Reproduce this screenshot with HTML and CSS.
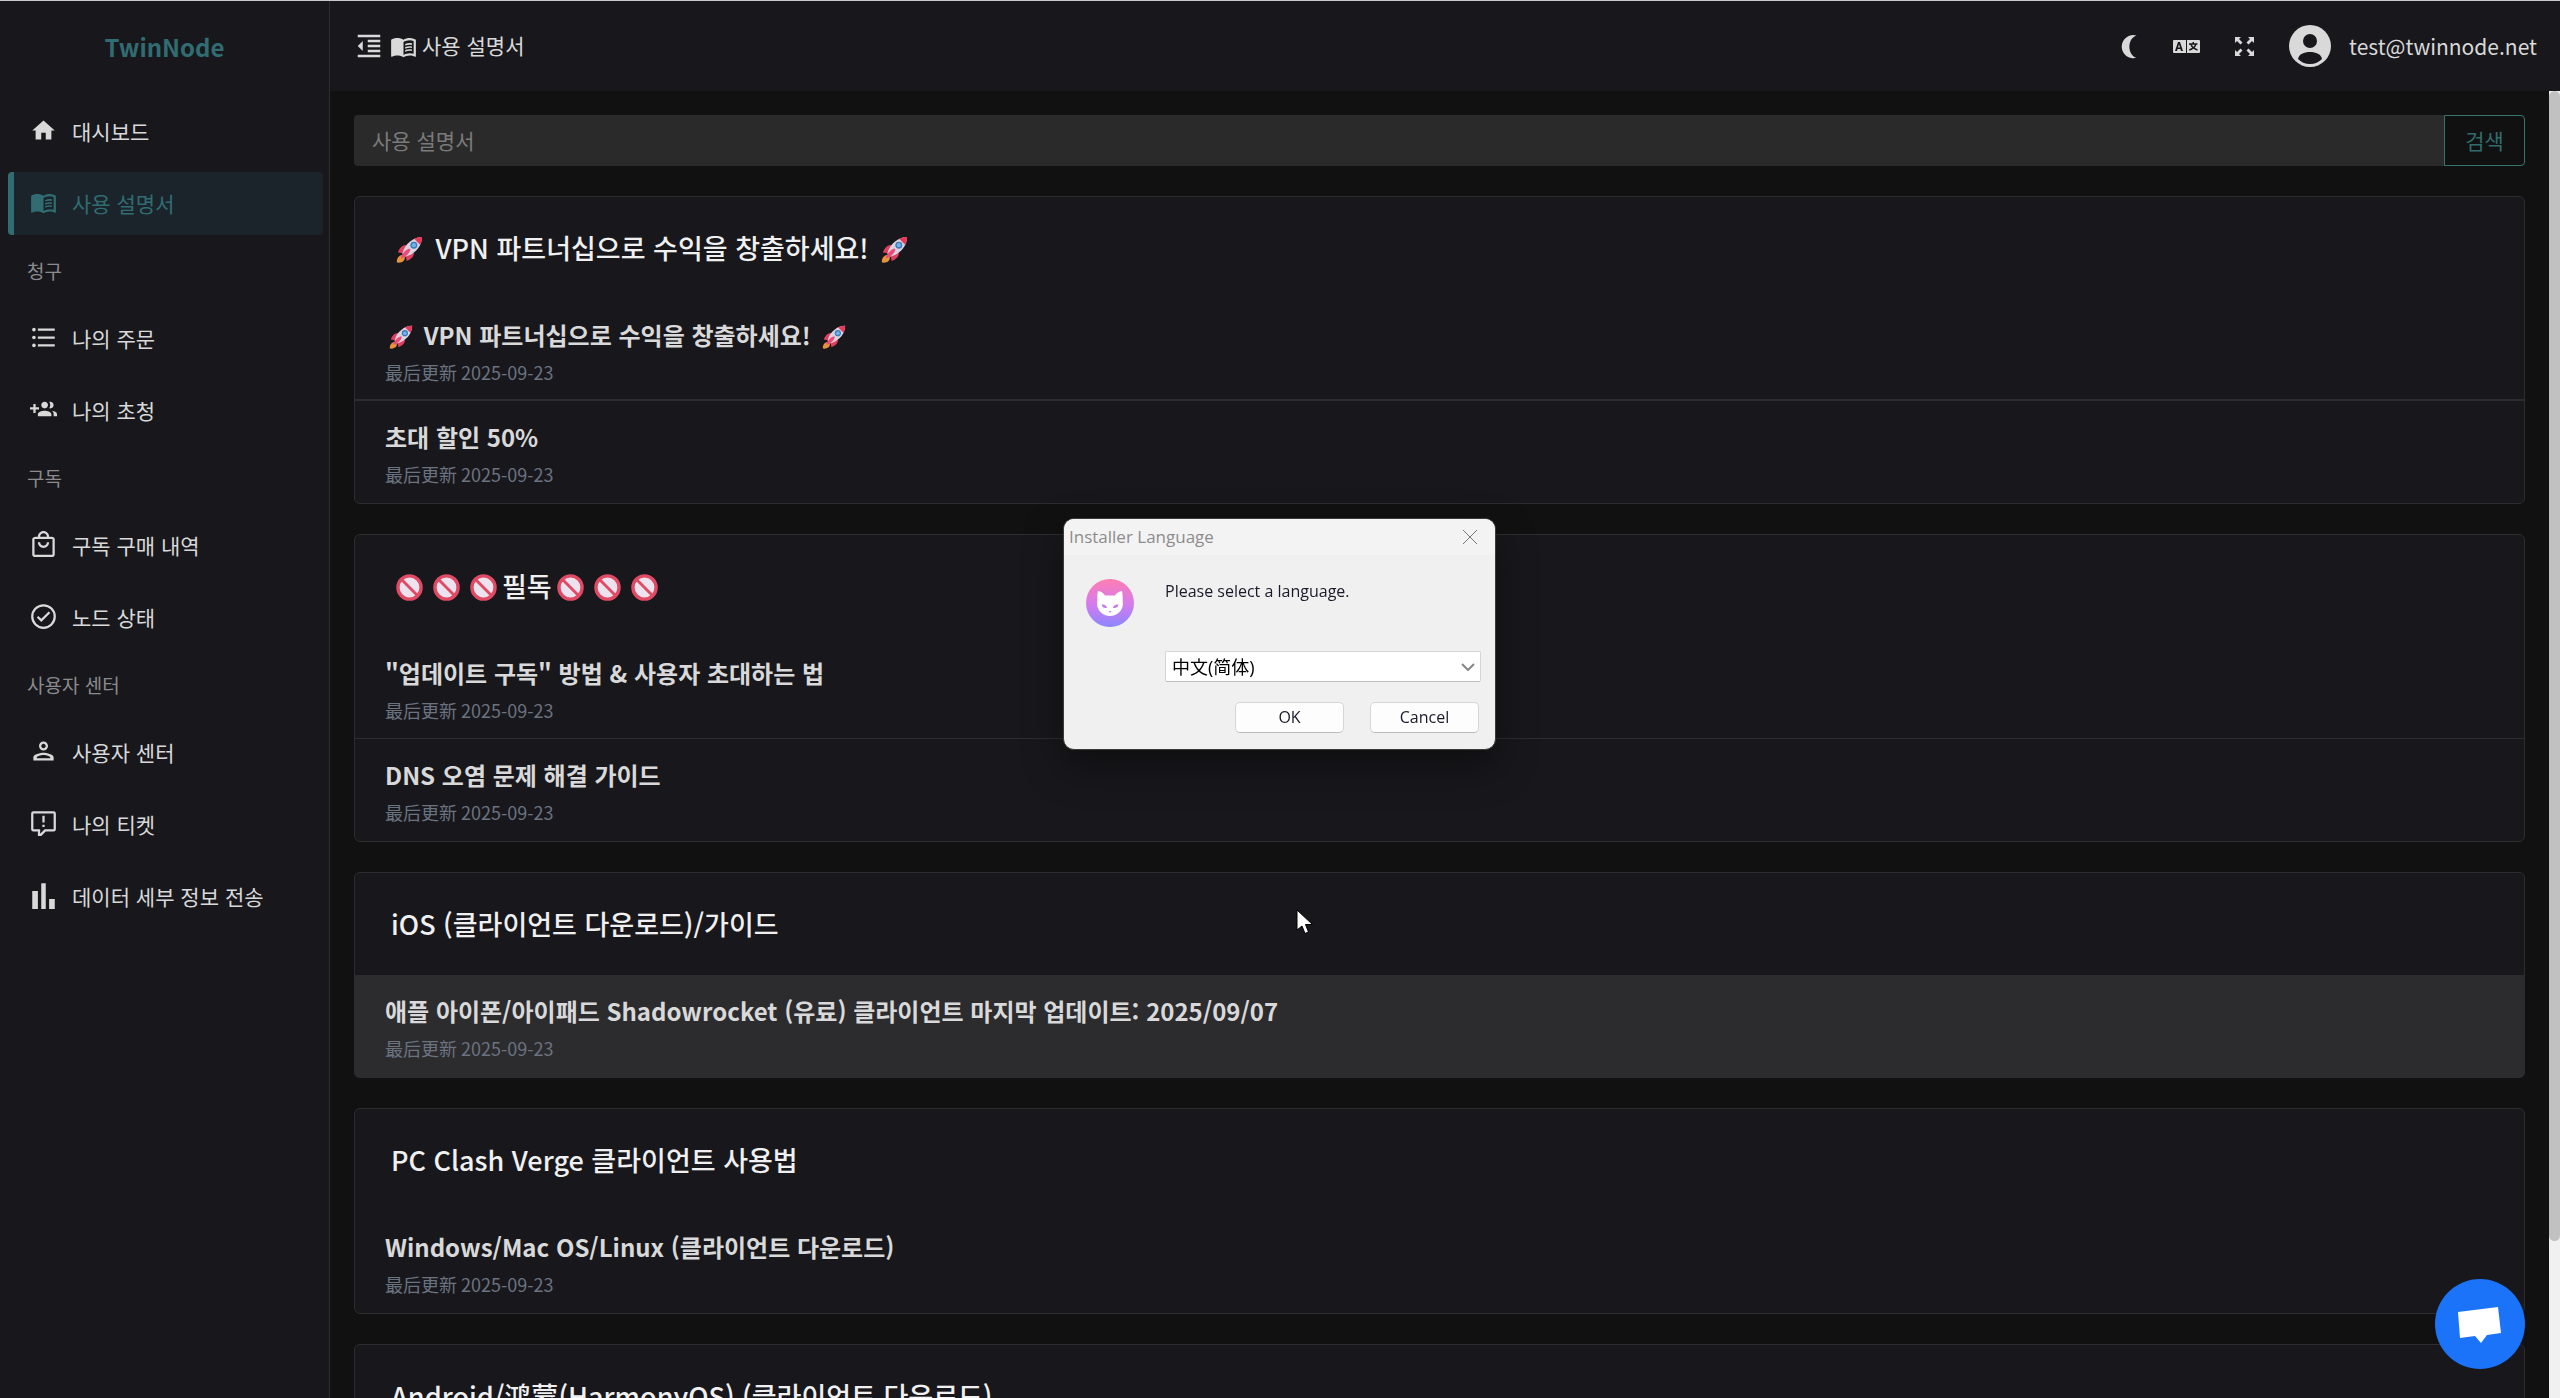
FILE: index.html
```html
<!DOCTYPE html>
<html lang="ko">
<head>
    <meta charset="UTF-8">
    <meta name="viewport" content="width=device-width, initial-scale=1.0">
    <title>사용 설명서 | TwinNode</title>
    <link rel="stylesheet" href="styles.css">
</head>
<body>
    <svg class="sprite" aria-hidden="true">
        <symbol id="rocket" viewBox="0 0 28 28">
            <path fill="#e0405f" d="M11 9.500C7 9 4 12 2 17l6 1zM18.500 17c.5 4-2.500 7-7.500 9l-1-6z"/>
            <path fill="#e8923c" d="M5 20c3-1 5 1 4 4-1 3-5 4-8 3.500C.5 24.500 2 21 5 20z"/>
            <path fill="#d9d3e0" d="M27 1C18 1 9 8 6.500 18.500L9.500 21.500C20 19 27 10 27 1z"/>
            <path fill="#e8385a" d="M27 1c-3 0-5.500.6-8 2l6 6c1.400-2.500 2-5 2-8z"/>
            <path fill="#ee4a78" d="M14 13c-4 1-6.500 4-9 9l1 1c5-2 8-5 9-9z"/>
            <circle cx="18.500" cy="9.500" r="3.600" fill="#3f78b8"/>
            <circle cx="18.500" cy="9.500" r="2.200" fill="#6db4ea"/>
        </symbol>
        <symbol id="ban" viewBox="0 0 28 28">
            <circle cx="14" cy="14" r="12" fill="#ece3ee" stroke="#e04a64" stroke-width="3.500"/>
            <path d="M5.500 5.500l17 17" stroke="#e04a64" stroke-width="3"/>
        </symbol>
    </svg>

    <div class="layout">
        <aside class="sidebar">
            <a class="logo" href="#">TwinNode</a>
            <nav class="menu">
                <a class="menu-item" href="#">
                    <svg class="icon" viewBox="0 0 24 24"><path d="M10 20v-6h4v6h5v-8h3L12 3 2 12h3v8z"/></svg>
                    대시보드
                </a>
                <a class="menu-item active" href="#">
                    <svg class="icon" viewBox="0 0 24 24"><path fill-rule="evenodd" d="M21 5c-1.100-.35-2.300-.5-3.500-.5-1.950 0-4.050.4-5.500 1.500-1.450-1.100-3.550-1.500-5.500-1.500S2.450 4.900 1 6v14.650c0 .25.25.5.5.5.1 0 .15-.05.25-.05C3.100 20.450 5.050 20 6.500 20c1.950 0 4.050.4 5.500 1.500 1.350-.85 3.800-1.500 5.500-1.500 1.650 0 3.350.3 4.750 1.050.1.050.15.050.25.050.25 0 .5-.25.5-.5V6c-.6-.45-1.250-.75-2-1zm0 13.500c-1.100-.35-2.300-.5-3.500-.5-1.700 0-4.150.65-5.500 1.500V8c1.350-.85 3.800-1.500 5.500-1.500 1.200 0 2.400.15 3.500.5z"/><path d="M13.500 9.700c2.200-.8 4.200-.9 6-.5v1.400c-1.800-.4-3.800-.3-6 .6zM13.500 12.400c2.200-.8 4.200-.9 6-.5v1.400c-1.800-.4-3.800-.3-6 .6zM13.500 15.100c2.200-.8 4.200-.9 6-.5V16c-1.800-.4-3.800-.3-6 .6z"/></svg>
                    사용 설명서
                </a>
                <div class="menu-group">청구</div>
                <a class="menu-item" href="#">
                    <svg class="icon" viewBox="0 0 24 24"><path d="M7 4h15v2H7zM7 11h15v2H7zM7 18h15v2H7z"/><circle cx="3.500" cy="5" r="1.600"/><circle cx="3.500" cy="12" r="1.600"/><circle cx="3.500" cy="19" r="1.600"/></svg>
                    나의 주문
                </a>
                <a class="menu-item" href="#">
                    <svg class="icon" viewBox="0 0 24 24"><path d="M8 10H5V7H3v3H0v2h3v3h2v-3h3v-2zm10 1c1.660 0 2.990-1.340 2.990-3S19.660 5 18 5c-.32 0-.63.050-.91.140.57.810.9 1.790.9 2.860s-.34 2.040-.9 2.860c.28.090.59.140.91.140zm-5 0c1.660 0 2.990-1.340 2.990-3S14.660 5 13 5s-3 1.340-3 3 1.340 3 3 3zm6.620 2.160c.83.73 1.380 1.660 1.380 2.840v2h3v-2c0-1.540-2.370-2.490-4.380-2.840zM13 13c-2 0-6 1-6 3v2h12v-2c0-2-4-3-6-3z"/></svg>
                    나의 초청
                </a>
                <div class="menu-group">구독</div>
                <a class="menu-item" href="#">
                    <svg class="icon" viewBox="0 0 24 24"><path d="M19 5h-2c0-2.760-2.240-5-5-5S7 2.240 7 5H5c-1.660 0-3 1-3 2v14c0 1.100.9 2 2 2h16c1.100 0 2-.9 2-2V7c0-1-1-2-3-2zm-7-3c1.660 0 3 1.340 3 3H9c0-1.660 1.340-3 3-3zm8 19H4V7h16zm-8-8c-1.660 0-3-1.340-3-3H7c0 2.760 2.240 5 5 5s5-2.240 5-5h-2c0 1.660-1.340 3-3 3z"/></svg>
                    구독 구매 내역
                </a>
                <a class="menu-item" href="#">
                    <svg class="icon" viewBox="0 0 24 24"><path d="M12 1a11 11 0 1 0 0 22 11 11 0 0 0 0-22zm0 20a9 9 0 1 1 0-18 9 9 0 0 1 0 18z"/><path d="M16.600 7.500L10 14.100l-2.600-2.600L6 12.900l4 4 8-8z"/></svg>
                    노드 상태
                </a>
                <div class="menu-group">사용자 센터</div>
                <a class="menu-item" href="#">
                    <svg class="icon" viewBox="0 0 24 24"><path d="M12 5c1.100 0 2 .9 2 2s-.9 2-2 2-2-.9-2-2 .9-2 2-2m0 10c2.700 0 5.800 1.290 6 2v1H6v-.99c.2-.72 3.300-2.010 6-2.010m0-12C9.790 3 8 4.790 8 7s1.790 4 4 4 4-1.790 4-4-1.790-4-4-4zm0 10c-2.670 0-9 1.340-9 4v3h18v-3c0-2.660-6.330-4-9-4z"/></svg>
                    사용자 센터
                </a>
                <a class="menu-item" href="#">
                    <svg class="icon" viewBox="0 0 24 24"><path d="M21 1H3a2 2 0 0 0-2 2v14a2 2 0 0 0 2 2h4v4h3l4-4h7a2 2 0 0 0 2-2V3a2 2 0 0 0-2-2zm0 16h-8l-4 4v-4H3V3h18z"/><path d="M11 5h2v6h-2zM11 13h2v2h-2z"/></svg>
                    나의 티켓
                </a>
                <a class="menu-item" href="#">
                    <svg class="icon" viewBox="0 0 24 24"><path d="M2 8h5v16H2zM10 1h4v23h-4zM17 15h5v9h-5z"/></svg>
                    데이터 세부 정보 전송
                </a>
            </nav>
        </aside>

        <div class="page">
            <header class="header">
                <button class="icon-btn" type="button" aria-label="메뉴 접기">
                    <svg class="icon-fold" viewBox="0 0 24 24"><path d="M11 17h10v-2H11v2zm-8-5l4 4V8l-4 4zm0 9h18v-2H3v2zM3 3v2h18V3H3zm8 6h10V7H11v2zm0 4h10v-2H11v2z"/></svg>
                </button>
                <div class="breadcrumb">
                    <svg class="icon" viewBox="0 0 24 24"><path fill-rule="evenodd" d="M21 5c-1.100-.35-2.300-.5-3.500-.5-1.950 0-4.050.4-5.500 1.500-1.450-1.100-3.550-1.500-5.500-1.500S2.450 4.900 1 6v14.650c0 .25.25.5.5.5.1 0 .15-.05.25-.05C3.100 20.450 5.050 20 6.500 20c1.950 0 4.050.4 5.500 1.500 1.350-.85 3.800-1.500 5.500-1.500 1.650 0 3.350.3 4.750 1.050.1.050.15.050.25.050.25 0 .5-.25.5-.5V6c-.6-.45-1.250-.75-2-1zm0 13.500c-1.100-.35-2.300-.5-3.500-.5-1.700 0-4.150.65-5.500 1.500V8c1.350-.85 3.800-1.500 5.500-1.500 1.200 0 2.400.15 3.500.5z"/><path d="M13.500 9.700c2.200-.8 4.200-.9 6-.5v1.400c-1.800-.4-3.800-.3-6 .6zM13.500 12.400c2.200-.8 4.200-.9 6-.5v1.400c-1.800-.4-3.800-.3-6 .6zM13.500 15.100c2.200-.8 4.200-.9 6-.5V16c-1.800-.4-3.800-.3-6 .6z"/></svg>
                    <span>사용 설명서</span>
                </div>
                <div class="header-right">
                    <button class="icon-btn" type="button" aria-label="다크 모드">
                        <svg class="icon" viewBox="0 0 27 27"><path d="M21.500 2.500A11.600 11.600 0 1 0 21.500 24.800C12 22 12 5.500 21.500 2.500z"/></svg>
                    </button>
                    <button class="icon-btn" type="button" aria-label="언어">
                        <svg class="icon" viewBox="0 0 27 27"><path fill-rule="evenodd" d="M1 7h12v13H1a1 1 0 0 1-1-1V8a1 1 0 0 1 1-1zm4 2L2 18h2l.6-2h2.800l.6 2h2L7 9zm1 2.300L7 14.500H5z"/><path fill-rule="evenodd" d="M14 7h12a1 1 0 0 1 1 1v11a1 1 0 0 1-1 1H14zm5.500 2v1.200H16v1.500h1.400c.4 1.300 1 2.300 1.800 3.100-.9.700-2 1.100-3.200 1.400l.5 1.500c1.500-.4 2.800-1 3.900-1.900 1 .8 2.300 1.500 3.800 1.900l.5-1.500c-1.200-.3-2.200-.7-3.100-1.400.8-.8 1.400-1.800 1.800-3.100h1.100v-1.500h-3.500V9zm-.5 2.700h2.800c-.3.800-.8 1.500-1.400 2.100-.6-.6-1.100-1.300-1.400-2.100z"/></svg>
                    </button>
                    <button class="icon-btn" type="button" aria-label="전체 화면">
                        <svg class="icon" viewBox="0 0 27 27"><path d="M4 4h6L8 6l3.500 3.500-2 2L6 8l-2 2zM23 4v6l-2-2-3.500 3.500-2-2L19 6l-2-2zM4 23v-6l2 2 3.500-3.500 2 2L8 21l2 2zM23 23h-6l2-2-3.500-3.500 2-2L21 19l2-2z"/></svg>
                    </button>
                    <a class="user" href="#">
                        <svg class="avatar" viewBox="0 0 42 42"><circle cx="21" cy="21" r="21"/><circle class="cut" cx="21" cy="16" r="7"/><path class="cut" d="M9 34c1-5 6-7 12-7s11 2 12 7c-3 3-7 5-12 5s-9-2-12-5z"/></svg>
                        <span>test@twinnode.net</span>
                    </a>
                </div>
            </header>

            <div class="scroll-area">
                <main class="content">
                    <form class="search">
                        <input class="search-input" type="text" placeholder="사용 설명서" aria-label="사용 설명서">
                        <button class="search-btn" type="submit">검색</button>
                    </form>

                    <section class="card">
                        <h2 class="card-title"><svg class="emoji" role="img" aria-label="🚀"><use href="#rocket"/></svg> VPN 파트너십으로 수익을 창출하세요! <svg class="emoji" role="img" aria-label="🚀"><use href="#rocket"/></svg></h2>
                        <a class="article article-line" href="#">
                            <h3><svg class="emoji" role="img" aria-label="🚀"><use href="#rocket"/></svg> VPN 파트너십으로 수익을 창출하세요! <svg class="emoji" role="img" aria-label="🚀"><use href="#rocket"/></svg></h3>
                            <p lang="zh-CN">最后更新 2025-09-23</p>
                        </a>
                        <a class="article" href="#">
                            <h3>초대 할인 50%</h3>
                            <p lang="zh-CN">最后更新 2025-09-23</p>
                        </a>
                    </section>

                    <section class="card">
                        <h2 class="card-title"><svg class="emoji" role="img" aria-label="🚫"><use href="#ban"/></svg><svg class="emoji" role="img" aria-label="🚫"><use href="#ban"/></svg><svg class="emoji" role="img" aria-label="🚫"><use href="#ban"/></svg>필독<svg class="emoji" role="img" aria-label="🚫"><use href="#ban"/></svg><svg class="emoji" role="img" aria-label="🚫"><use href="#ban"/></svg><svg class="emoji" role="img" aria-label="🚫"><use href="#ban"/></svg></h2>
                        <a class="article" href="#">
                            <h3>"업데이트 구독" 방법 &amp; 사용자 초대하는 법</h3>
                            <p lang="zh-CN">最后更新 2025-09-23</p>
                        </a>
                        <a class="article" href="#">
                            <h3>DNS 오염 문제 해결 가이드</h3>
                            <p lang="zh-CN">最后更新 2025-09-23</p>
                        </a>
                    </section>

                    <section class="card">
                        <h2 class="card-title">iOS (클라이언트 다운로드)/가이드</h2>
                        <a class="article article-hover" href="#">
                            <h3>애플 아이폰/아이패드 Shadowrocket (유료) 클라이언트 마지막 업데이트: 2025/09/07</h3>
                            <p lang="zh-CN">最后更新 2025-09-23</p>
                        </a>
                    </section>

                    <section class="card">
                        <h2 class="card-title">PC Clash Verge 클라이언트 사용법</h2>
                        <a class="article" href="#">
                            <h3>Windows/Mac OS/Linux (클라이언트 다운로드)</h3>
                            <p lang="zh-CN">最后更新 2025-09-23</p>
                        </a>
                    </section>

                    <section class="card">
                        <h2 class="card-title">Android/<span lang="zh-CN">鸿蒙</span>(HarmonyOS) (클라이언트 다운로드)</h2>
                    </section>
                </main>
                <div class="scrollbar"><div class="scrollbar-thumb"></div></div>
            </div>
        </div>
    </div>

    <button class="chat-btn" type="button" aria-label="채팅">
        <svg viewBox="0 0 90 90"><path d="M23 33L63 28L66 54L52 56L46 64L40 57L25 59z"/></svg>
    </button>

    <!-- installer window -->
    <div class="dialog" role="dialog" aria-labelledby="dialogTitle">
        <div class="dialog-bar">
            <span id="dialogTitle">Installer Language</span>
            <button class="dialog-close" type="button" aria-label="Close">
                <svg viewBox="0 0 16 16"><path d="M1 1l14 14M15 1L1 15"/></svg>
            </button>
        </div>
        <div class="dialog-body">
            <svg class="dialog-logo" viewBox="0 0 48 48">
                <defs>
                    <linearGradient id="catBg" x1="0" y1="0" x2="0" y2="1">
                        <stop offset="0" stop-color="#ff7eb0"/>
                        <stop offset="0.5" stop-color="#d77bea"/>
                        <stop offset="1" stop-color="#8b86ff"/>
                    </linearGradient>
                </defs>
                <circle cx="24" cy="24" r="24" fill="url(#catBg)"/>
                <path fill="#fff" d="M12 12c3 .5 5.500 2 7 4.500h10c1.500-2.500 4-4 7-4.500 1 4 .5 7 .8 11C38 31 31 37 24 37S10 31 11.200 23c.3-4-.2-7 .8-11z"/>
                <path fill="#c77be8" d="M15.500 25.500c3-.5 5 .8 5.500 3.500-3 .5-5-.8-5.500-3.500zM32.500 25.500c-3-.5-5 .8-5.500 3.500 3 .5 5-.8 5.500-3.500zM22.500 32h3L24 33.800z"/>
            </svg>
            <div class="dialog-form">
                <label for="language">Please select a language.</label>
                <div class="select-wrap">
                    <select id="language">
                        <option lang="zh-CN">中文(简体)</option>
                    </select>
                    <svg viewBox="0 0 14 8"><path d="M1 1l6 6 6-6"/></svg>
                </div>
            </div>
        </div>
        <div class="dialog-actions">
            <button type="button">OK</button>
            <button type="button">Cancel</button>
        </div>
    </div>

    <svg class="cursor" viewBox="0 0 18 26"><path d="M1 1v20l5-4 3 7.500 3.500-1.500-3-7.500h7z"/></svg>
</body>
</html>
```
FILE: styles.css
```css
* {
    box-sizing: border-box;
}
body {
    margin: 0;
    height: 100vh;
    overflow: hidden;
    background: #111111;
    color: #d9d9da;
    font-family: "Noto Sans CJK KR", sans-serif;
    font-size: 21px;
    line-height: 32px;
}
[lang="zh-CN"] {
    font-family: "Noto Sans CJK SC", sans-serif;
}
a {
    color: inherit;
    text-decoration: none;
}
button, input, select {
    font: inherit;
    color: inherit;
    margin: 0;
}
svg {
    display: block;
    fill: currentColor;
    flex-shrink: 0;
}
.sprite {
    display: none;
}
.icon {
    width: 27px;
    height: 27px;
}
.layout {
    display: flex;
    height: 100vh;
    border-top: 1px solid #c8c9c9;
}

/* sidebar */
.sidebar {
    width: 330px;
    flex-shrink: 0;
    background: #18181c;
    border-right: 1px solid #2d2d30;
}
.logo {
    display: flex;
    align-items: center;
    justify-content: center;
    height: 91px;
    color: #316c72;
    font-size: 24px;
    font-weight: bold;
}
.menu {
    display: flex;
    flex-direction: column;
    gap: 9px;
    padding: 8px 6px 0 8px;
}
.menu-item {
    display: flex;
    align-items: center;
    gap: 15px;
    height: 63px;
    padding: 0 0 2px 22px;
}
.menu-item.active {
    color: #316c72;
    background: #1b242a;
    border-left: 6px solid #316c72;
    border-radius: 4px;
    padding-left: 16px;
}
.menu-group {
    height: 54px;
    padding-left: 19px;
    font-size: 19px;
    line-height: 54px;
    color: #8b8b8d;
}

/* header */
.page {
    flex: 1;
    min-width: 0;
    display: flex;
    flex-direction: column;
}
.header {
    display: flex;
    align-items: center;
    height: 90px;
    flex-shrink: 0;
    padding: 0 23px 0 24px;
    background: #18181c;
}
.icon-btn {
    padding: 0;
    border: none;
    background: none;
    cursor: pointer;
}
.icon-fold {
    width: 30px;
    height: 30px;
}
.breadcrumb {
    display: flex;
    align-items: center;
    gap: 5px;
    margin-left: 6px;
}
.breadcrumb span {
    padding-bottom: 2px;
}
.header-right {
    display: flex;
    align-items: center;
    gap: 31px;
    margin-left: auto;
}
.user {
    display: flex;
    align-items: center;
    gap: 18px;
}
.avatar {
    width: 42px;
    height: 42px;
}
.cut {
    fill: #18181c;
}

/* content */
.scroll-area {
    flex: 1;
    min-height: 0;
    display: flex;
}
.content {
    flex: 1;
    min-width: 0;
    overflow: hidden;
    padding: 24px 24px 0;
}
.scrollbar {
    width: 11px;
    background: #f0f0f0;
}
.scrollbar-thumb {
    height: 88%;
    background: #c1c1c1;
    border-radius: 6px;
}
.search {
    display: flex;
    height: 51px;
    margin-bottom: 30px;
}
.search-input {
    flex: 1;
    min-width: 0;
    padding: 0 18px 2px;
    border: none;
    border-radius: 4px 0 0 4px;
    background: #2a2a2a;
}
.search-input::placeholder {
    color: #7a7a7a;
    opacity: 1;
}
.search-btn {
    width: 81px;
    padding: 0 0 2px;
    border: 1px solid #36766f;
    border-radius: 0 4px 4px 0;
    background: none;
    color: #316c6c;
}
.card {
    margin-bottom: 30px;
    border: 1px solid #2d2d30;
    border-radius: 6px;
    background: #18181c;
}
.card-title {
    margin: 0;
    padding: 0 36px;
    font-size: 27px;
    font-weight: 500;
    line-height: 102px;
    color: #f0f0f0;
}
.emoji {
    display: inline-block;
    width: 27px;
    height: 27px;
    margin: 0 5px;
    vertical-align: -4px;
}
.article {
    display: block;
    height: 102px;
    padding: 17px 30px;
    border-bottom: 1px solid #2d2d30;
}
.article:last-child {
    border-bottom-color: transparent;
}
.article-line {
    border-bottom: 2px solid #2d2d30;
}
.article-hover {
    margin: 0 -1px -1px;
    height: 103px;
    padding: 17px 31px;
    background: #2c2c2f;
    border-radius: 0 0 6px 6px;
}
.article h3 {
    margin: 0;
    font-size: 24px;
    font-weight: bold;
    line-height: 38px;
}
.article .emoji {
    width: 24px;
    height: 24px;
    margin: 0 4px;
}
.article p {
    margin: 0;
    font-size: 18px;
    line-height: 36px;
    color: #6b7280;
}

.chat-btn {
    position: fixed;
    right: 35px;
    bottom: 29px;
    width: 90px;
    height: 90px;
    padding: 0;
    border: none;
    border-radius: 50%;
    background: #1a73f8;
    color: #fff;
}

/* installer window */
.dialog {
    position: fixed;
    left: 1063px;
    top: 518px;
    width: 433px;
    padding-bottom: 16px;
    border: 1px solid #3a3a3a;
    border-radius: 11px;
    background: #f0f0f0;
    color: #1a1a2a;
    font-family: "Open Sans", "Noto Sans CJK SC", sans-serif;
    font-size: 16px;
    line-height: 24px;
    overflow: hidden;
    box-shadow: 0 16px 40px rgba(0,0,0,0.4);
}
.dialog-bar {
    display: flex;
    align-items: center;
    justify-content: space-between;
    height: 36px;
    padding: 0 17px 0 5px;
    background: #f3f3f3;
    color: #8c8c8c;
    font-size: 17px;
}
.dialog-close {
    padding: 0;
    border: none;
    background: none;
}
.dialog-close svg {
    width: 16px;
    height: 16px;
    fill: none;
    stroke: #777;
}
.dialog-body {
    display: flex;
    gap: 31px;
    padding: 24px 14px 0 22px;
}
.dialog-logo {
    width: 48px;
    height: 48px;
}
.dialog-form {
    flex: 1;
    display: flex;
    flex-direction: column;
    gap: 48px;
}
.select-wrap {
    position: relative;
}
.select-wrap select {
    display: block;
    width: 100%;
    height: 31px;
    padding: 0 6px;
    border: 1px solid #d5d5d5;
    border-bottom-color: #bbb;
    border-radius: 2px;
    background: #fff;
    color: #000;
    font-size: 18px;
    line-height: 28px;
    appearance: none;
}
.select-wrap svg {
    position: absolute;
    right: 6px;
    top: 12px;
    width: 14px;
    height: 8px;
    fill: none;
    stroke: #888;
    stroke-width: 2;
}
.dialog-actions {
    display: flex;
    justify-content: flex-end;
    gap: 26px;
    padding: 20px 16px 0;
}
.dialog-actions button {
    width: 109px;
    height: 31px;
    padding: 0 0 2px;
    border: 1px solid #d5d5d5;
    border-bottom-color: #bbb;
    border-radius: 5px;
    background: #fdfdfd;
}
.cursor {
    position: fixed;
    left: 1296px;
    top: 909px;
    width: 18px;
    height: 26px;
    fill: #fff;
    stroke: #000;
}
```
